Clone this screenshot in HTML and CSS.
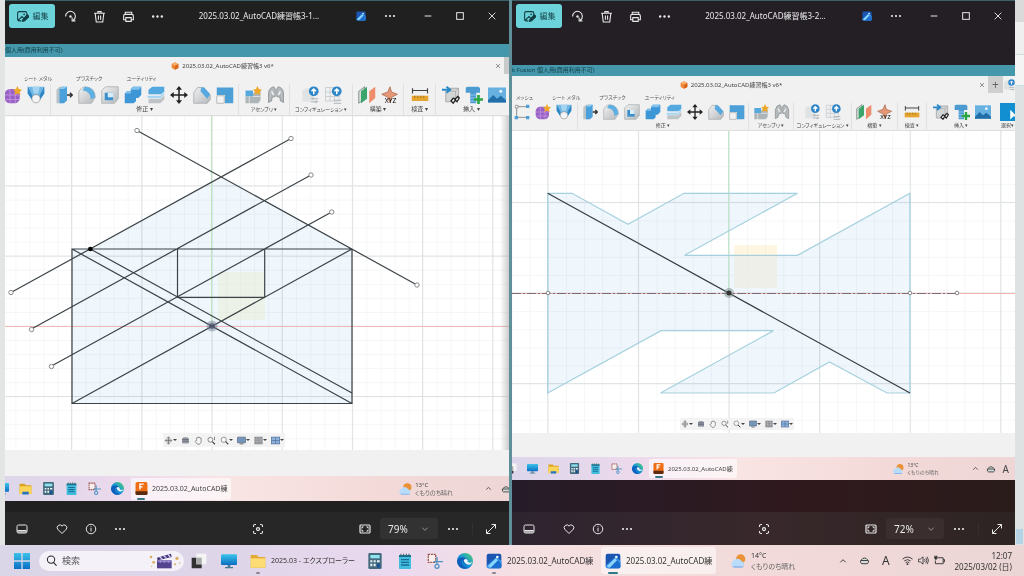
FILE: index.html
```html
<!DOCTYPE html>
<html lang="ja">
<head>
<meta charset="utf-8">
<title>フォト - AutoCAD練習帳</title>
<link rel="stylesheet" href="styles.css">
</head>
<body>
<svg class="sprite" aria-hidden="true">
<defs>
<linearGradient id="gBlue" x1="0" y1="0" x2="0" y2="1"><stop offset="0" stop-color="#3cc3ea"/><stop offset="1" stop-color="#0a6fc4"/></linearGradient>
<linearGradient id="gEdge" x1="0" y1="1" x2="1" y2="0"><stop offset="0" stop-color="#0b55b8"/><stop offset=".5" stop-color="#1797d8"/><stop offset="1" stop-color="#5ad36a"/></linearGradient>
<linearGradient id="gGrey" x1="0" y1="0" x2="1" y2="1"><stop offset="0" stop-color="#f1f1f1"/><stop offset="1" stop-color="#b4b8bb"/></linearGradient>
<pattern id="minorA" x="212" y="326" width="14.04" height="14.04" patternUnits="userSpaceOnUse"><path d="M0 0H14.04M0 0V14.04" stroke="#e6e8e9" fill="none"/></pattern>
<pattern id="majorA" x="211.5" y="325.8" width="70.2" height="70.2" patternUnits="userSpaceOnUse"><path d="M0 .5H71M.5 0V71" stroke="#d3d6d7" fill="none"/></pattern>
<pattern id="minorB" x="729" y="293" width="18.12" height="18.12" patternUnits="userSpaceOnUse"><path d="M0 0H18.12M0 0V18.12" stroke="#e6e8e9" fill="none"/></pattern>
<pattern id="majorB" x="728.5" y="292.5" width="90.6" height="90.6" patternUnits="userSpaceOnUse"><path d="M0 .5H91M.5 0V91" stroke="#d3d8d8" fill="none"/></pattern>

<symbol id="edit" viewBox="0 0 24 24"><g fill="none" stroke="#123d42" stroke-width="2"><path d="M20 11V6a3 3 0 0 0-3-3H6a3 3 0 0 0-3 3v11a3 3 0 0 0 3 3h4M4 19l7-7 3 3"/><path d="M12 21l1-4 8-8 3 3-8 8z" fill="#123d42"/></g><circle cx="15" cy="8" r="1.6" fill="#123d42"/></symbol>
<symbol id="rotate" viewBox="0 0 24 24"><g fill="none" stroke="currentColor" stroke-width="2"><path d="M3 12a9 9 0 1 1 14 7M15 14v6h6"/></g><circle cx="12" cy="12" r="2.2" fill="currentColor"/></symbol>
<symbol id="trash" viewBox="0 0 24 24"><g fill="none" stroke="currentColor" stroke-width="2"><path d="M2 6h20M9 6V3h6v3M4 6l2 16h12l2-16M10 10v8M14 10v8"/></g></symbol>
<symbol id="print" viewBox="0 0 24 24"><g fill="none" stroke="currentColor" stroke-width="2"><path d="M6 8V4h12v4M6 18H3v-7a3 3 0 0 1 3-3h12a3 3 0 0 1 3 3v7h-3M7 14h10v7H7z"/></g></symbol>
<symbol id="dots" viewBox="0 0 24 24"><g fill="currentColor"><circle cx="4" cy="12" r="2.2"/><circle cx="12" cy="12" r="2.2"/><circle cx="20" cy="12" r="2.2"/></g></symbol>
<symbol id="photo" viewBox="0 0 24 24"><rect x="1" y="1" width="22" height="22" rx="3" fill="#1b56b3"/><path d="M1 19L16 6l7 6v9a2 2 0 0 1-2 2H4a3 3 0 0 1-3-3z" fill="#3c9bea"/><path d="M6 23L17 9l6 7v5a2 2 0 0 1-2 2z" fill="#1c6fd0"/><path d="M3 20L15 8l3 3L7 22z" fill="#8fd6fb"/><circle cx="17" cy="6" r="2" fill="#e9f7ff"/></symbol>
<symbol id="min" viewBox="0 0 24 24"><path d="M4 12h16" stroke="currentColor" stroke-width="2.4"/></symbol>
<symbol id="max" viewBox="0 0 24 24"><rect x="4" y="4" width="16" height="16" fill="none" stroke="currentColor" stroke-width="2.4"/></symbol>
<symbol id="close" viewBox="0 0 24 24"><path d="M4 4l16 16M20 4L4 20" stroke="currentColor" stroke-width="2.2"/></symbol>
<symbol id="film" viewBox="0 0 24 24"><rect x="2" y="4" width="20" height="16" rx="3" fill="none" stroke="currentColor" stroke-width="2"/><path d="M3 14h18v5H3z" fill="currentColor"/><path d="M6 16v2M10 16v2M14 16v2M18 16v2" stroke="#333" stroke-width="1.5"/></symbol>
<symbol id="heart" viewBox="0 0 24 24"><path d="M12 21L3.500 12.500a5.200 5.200 0 0 1 8.500-6.500 5.200 5.200 0 0 1 8.500 6.500z" fill="none" stroke="currentColor" stroke-width="2"/></symbol>
<symbol id="info" viewBox="0 0 24 24"><circle cx="12" cy="12" r="9.500" fill="none" stroke="currentColor" stroke-width="2"/><path d="M12 10v7M12 6.500v2" stroke="currentColor" stroke-width="2"/></symbol>
<symbol id="focus" viewBox="0 0 24 24"><path d="M3 8V6a3 3 0 0 1 3-3h2M16 3h2a3 3 0 0 1 3 3v2M21 16v2a3 3 0 0 1-3 3h-2M8 21H6a3 3 0 0 1-3-3v-2" fill="none" stroke="currentColor" stroke-width="2.200"/><circle cx="12" cy="12" r="3" fill="none" stroke="currentColor" stroke-width="2.500"/></symbol>
<symbol id="fit" viewBox="0 0 24 24"><rect x="2" y="4" width="20" height="16" rx="2" fill="none" stroke="currentColor" stroke-width="2.400"/><path d="M5 7h5L5 12zM19 7h-5l5 5zM5 17h5l-5-5zM19 17h-5l5-5z" fill="currentColor"/></symbol>
<symbol id="expand" viewBox="0 0 24 24"><path d="M13 3h8v8M21 3L3 21M3 13v8h8" fill="none" stroke="currentColor" stroke-width="2"/></symbol>
<symbol id="down" viewBox="0 0 24 24"><path d="M4 8l8 8 8-8" fill="none" stroke="currentColor" stroke-width="2.500"/></symbol>
<symbol id="up" viewBox="0 0 24 24"><path d="M4 16l8-8 8 8" fill="none" stroke="currentColor" stroke-width="2.800"/></symbol>

<symbol id="cube" viewBox="0 0 24 24"><path d="M12 1l10 5v12l-10 5-10-5V6z" fill="#ef8634"/><path d="M12 1l10 5-10 5L2 6z" fill="#f8b26f"/><path d="M12 11l10-5v12l-10 5z" fill="#d9641c"/></symbol>
<symbol id="sketch" viewBox="0 0 24 24"><path d="M4 4h16M4 4v16h16" fill="none" stroke="#777" stroke-width="1.200"/><g fill="#4e9fd6"><path d="M18 1h5v5h-5zM1 18h5v5H1zM18 18h5v5h-5z"/></g><path d="M2 2h4v4H2z" fill="#fff" stroke="#777"/></symbol>
<symbol id="form" viewBox="0 0 24 24"><rect x="1" y="4" width="20" height="19" rx="7" fill="#9a62c7"/><path d="M1 12h20M2 18h18M8 4v19M15 4v19" stroke="#c79be4" stroke-width="1"/><path d="M18 0l2 4 4 1-3 3 1 4-4-2-4 2 1-4-3-3 4-1z" fill="#eea82b"/></symbol>
<symbol id="sheet" viewBox="0 0 24 24"><path d="M1 1h22v9l-6 9H7L1 10z" fill="#73b8e4"/><path d="M1 1l6 11v7L1 10zM23 1l-6 11v7l6-9z" fill="#2f88c6"/><path d="M7 1h10l-2 9H9z" fill="#a4d4f2"/><circle cx="12" cy="17" r="5.500" fill="#f5f5f5" stroke="#999"/></symbol>
<symbol id="press" viewBox="0 0 24 24"><path d="M2 5l4-4h6v19l-3 3H2z" fill="#b8c2c7"/><path d="M6 4l4-3h6v18l-4 4H6z" fill="#4aa0da"/><path d="M6 4l4-3h6l-4 3z" fill="#91cbef"/><path d="M16 12h6M20 9l3 3-3 3" fill="none" stroke="#333" stroke-width="2"/></symbol>
<symbol id="fillet" viewBox="0 0 24 24"><path d="M1 8Q4 1 11 1q12 2 12 14l-5 8H1z" fill="url(#gGrey)" stroke="#a7abad"/><path d="M9 1q13 0 14 14l-6 3Q17 7 6 6z" fill="#5fb0e2"/></symbol>
<symbol id="shell" viewBox="0 0 24 24"><path d="M1 6l5-5h17v16l-5 6H1z" fill="url(#gGrey)" stroke="#a5abae"/><path d="M5 9h11v10H5z" fill="#3b8fce"/><path d="M9 9h7v6H9z" fill="#d8edfa"/></symbol>
<symbol id="combine" viewBox="0 0 24 24"><path d="M1 10l3-3h5V4l3-3h11v11l-4 4h-3v4l-3 3H1z" fill="#3d96d5"/><path d="M9 4l3-3h11l-3 4H9zM1 10l3-3h5v3z" fill="#80c2ed"/></symbol>
<symbol id="split" viewBox="0 0 24 24"><path d="M2 5l5-4h16v6l-4 4H2z" fill="#52a8df"/><path d="M1 13h17l5-5v3l-5 5H1z" fill="#a5d5f2"/><path d="M2 17h16l5-5v6l-5 5H2z" fill="#bfc4c7"/></symbol>
<symbol id="move" viewBox="0 0 24 24"><path d="M12 3v18M3 12h18" stroke="#222" stroke-width="2"/><path d="M12 0l4 5H8zM12 24l4-5H8zM0 12l5-4v8zM24 12l-5-4v8z" fill="#222"/></symbol>
<symbol id="chamfer" viewBox="0 0 24 24"><path d="M1 9l5-7h8l9 10v6l-4 5H1z" fill="url(#gGrey)" stroke="#a1a5a7"/><path d="M11 2h4l8 9-4 6-9-10z" fill="#58a9df"/></symbol>
<symbol id="scale" viewBox="0 0 24 24"><path d="M1 2h22v21H12V12H1z" fill="#4ca0d7"/><path d="M1 13h10v10H1z" fill="#f3f3f3" stroke="#a8a8a8"/></symbol>
<symbol id="comp" viewBox="0 0 24 24"><path d="M2 6h10v8H2z" fill="#57a8dc"/><path d="M2 14h10v9H2zM12 10l3-3h7v12l-3 4h-7z" fill="#aeb5b9"/><path d="M12 14h9M7 14v9" stroke="#eee"/><path d="M18 0l2 4 4 1-3 3 1 4-4-2-4 2 1-4-3-3 4-1z" fill="#eea82b"/></symbol>
<symbol id="joint" viewBox="0 0 24 24"><path d="M2 22V9q1-7 7-8l2 3v10l-4 1-1 5zM22 22V9q-1-7-7-8l-2 3v10l4 1 1 5z" fill="#b4b9bb" stroke="#858b8e"/><path d="M6 7l3 5M18 7l-3 5" stroke="#eee" stroke-width="2"/></symbol>
<symbol id="conf1" viewBox="0 0 24 24"><path d="M2 6l5-3h9v14l-4 4H2z" fill="#e0e3e4"/><path d="M13 17h10M13 21h10M16 15v4M20 19v4" stroke="#b0b5b8" stroke-width="1.500"/><circle cx="17" cy="7" r="6.500" fill="#2e86c8"/><path d="M17 11V5M14 7l3-3 3 3" stroke="#fff" stroke-width="2" fill="none"/></symbol>
<symbol id="conf2" viewBox="0 0 24 24"><path d="M2 2h18v18H2zM2 8h18M2 14h18M8 2v18M14 2v18" stroke="#c3c8ca" fill="#eff0f1"/><path d="M13 19h10M13 23h10" stroke="#b0b5b8" stroke-width="1.500"/><circle cx="17" cy="7" r="6.500" fill="#2e86c8"/><path d="M17 11V5M14 7l3-3 3 3" stroke="#fff" stroke-width="2" fill="none"/></symbol>
<symbol id="plane" viewBox="0 0 24 24"><path d="M1 7l8-6v16l-8 6z" fill="#d9dddc" stroke="#67796f"/><path d="M4 7l8-6v16l-8 6z" fill="#3ca56c"/><path d="M15 7l8-6v15l-8 7z" fill="#ee8d6b"/></symbol>
<symbol id="axis" viewBox="0 0 24 24"><path d="M12 1l2 7 8 3-8 4-2 7-3-7-8-4 8-3z" fill="#e59775" stroke="#a7674c"/><text x="5" y="23" class="xyz">XYZ</text></symbol>
<symbol id="measure" viewBox="0 0 24 24"><path d="M2 3v7M22 3v7M2 6h20" stroke="#444" stroke-width="1.500"/><path d="M1 13h22v7H1z" fill="#e5a52f"/><path d="M5 13v3M9 13v3M13 13v3M17 13v3" stroke="#956817"/></symbol>
<symbol id="derive" viewBox="0 0 24 24"><path d="M5 7l4-4h13v12l-4 6H5z" fill="#d3d6d7" stroke="#999"/><path d="M5 7h13l4-4M18 7v14" fill="none" stroke="#aaa"/><path d="M0 5h9M6 1l5 4-5 4" fill="none" stroke="#2989ca" stroke-width="2.500"/><path d="M12 20l3-4 3 2-3 5zM17 18l4-4 2 2-3 5z" fill="#eee" stroke="#222" stroke-width="1.700"/></symbol>
<symbol id="bolt" viewBox="0 0 24 24"><path d="M1 2l3-1h14l2 2v6H1zM7 9h8v14H7z" fill="#4b9bd2"/><path d="M7 12h8M7 16h8M7 20h8" stroke="#a9d5ef"/><path d="M18 12v12M12 18h12" stroke="#2ba543" stroke-width="3.500"/></symbol>
<symbol id="image" viewBox="0 0 24 24"><rect y="2" width="24" height="20" fill="#66b1e0"/><circle cx="17" cy="7" r="2" fill="#eef8ff"/><path d="M0 19l7-7 5 5 5-4 7 6v3H0z" fill="#216ea9"/></symbol>
<symbol id="cursor" viewBox="0 0 24 24"><rect width="24" height="24" fill="#118fd0"/><path d="M15 9v13l4-4h5z" fill="#fff"/></symbol>

<symbol id="orbit" viewBox="0 0 24 24"><path d="M12 3v18M3 12h18M8 6l4-4 4 4M8 18l4 4 4-4" fill="none" stroke="#666" stroke-width="2"/><ellipse cx="12" cy="12" rx="9" ry="4" fill="none" stroke="#777" stroke-width="1.500"/></symbol>
<symbol id="look" viewBox="0 0 24 24"><path d="M3 7l4-4h10l4 4v13H3z" fill="#999ca5"/><path d="M3 9h18M3 14h18" stroke="#555c6c" stroke-width="2"/></symbol>
<symbol id="hand" viewBox="0 0 24 24"><path d="M7 12V5h3V3h3v1h3v2h3v10l-4 6H9l-6-8 2-2z" fill="#f7f7f7" stroke="#666" stroke-width="1.800"/></symbol>
<symbol id="zoom" viewBox="0 0 24 24"><circle cx="9" cy="10" r="6.500" fill="#f7f7f7" stroke="#666" stroke-width="2"/><path d="M14 15l7 7" stroke="#444" stroke-width="3"/><path d="M20 2v9" stroke="#666" stroke-width="2"/></symbol>
<symbol id="zoomw" viewBox="0 0 24 24"><circle cx="10" cy="10" r="7" fill="#f7f7f7" stroke="#777" stroke-width="2"/><path d="M15 15l7 7" stroke="#444" stroke-width="3"/></symbol>
<symbol id="view" viewBox="0 0 24 24"><rect x="1" y="3" width="22" height="15" rx="1" fill="#7696b9" stroke="#5a6e88" stroke-width="2"/><path d="M7 21h10" stroke="#777" stroke-width="3"/></symbol>
<symbol id="grid" viewBox="0 0 24 24"><rect x="1" y="2" width="22" height="20" fill="#8e9195"/><path d="M1 8h22M1 14h22M8 2v20M16 2v20" stroke="#c7cacd"/></symbol>
<symbol id="panes" viewBox="0 0 24 24"><rect x="1" y="3" width="22" height="18" fill="#8db1dc" stroke="#54759f" stroke-width="2"/><path d="M12 3v18M1 12h22" stroke="#54759f" stroke-width="2"/></symbol>

<symbol id="start" viewBox="0 0 24 24"><path d="M0 0h11v11H0zM13 0h11v11H13zM0 13h11v11H0zM13 13h11v11H13z" fill="url(#gBlue)"/></symbol>
<symbol id="search" viewBox="0 0 24 24"><circle cx="11" cy="10" r="8" fill="none" stroke="#222" stroke-width="2.200"/><path d="M16 16l7 7" stroke="#222" stroke-width="2.500"/></symbol>
<symbol id="clap" viewBox="0 0 48 24"><path d="M12 11h22v12H12z" fill="#54448d"/><path d="M12 7l21-6 1 5-21 5z" fill="#413476"/><path d="M16 6l4 3M22 4l4 3M28 2l4 4" stroke="#d8cffa" stroke-width="2"/><path d="M13 13h21M17 11v4M23 11v4M29 11v4" stroke="#9f8fdb" stroke-width="1.500"/><g fill="#d9ad5a"><circle cx="3" cy="6" r="2"/><circle cx="7" cy="14" r="2"/><circle cx="4" cy="20" r="1"/><circle cx="42" cy="8" r="2.500"/><circle cx="39" cy="17" r="1.500"/><circle cx="46" cy="15" r="1"/></g></symbol>
<symbol id="desk" viewBox="0 0 24 24"><path d="M8 1h15v16H8z" fill="#f4f4f4"/><path d="M1 7h7v10h8v6H1z" fill="#303030"/><path d="M8 7h8v10H8z" fill="#aaa"/></symbol>
<symbol id="monitor" viewBox="0 0 24 24"><rect y="2" width="24" height="16" rx="1.500" fill="url(#gBlue)"/><path d="M10 18h4v3h4v2H6v-2h4z" fill="#4a7992"/></symbol>
<symbol id="folder" viewBox="0 0 24 24"><path d="M1 3h9l3 3h10v16H1z" fill="#dca323"/><path d="M1 8h22v14H1z" fill="#fbd559"/><path d="M6 18h12v5H6z" fill="#2774bf"/></symbol>
<symbol id="folder2" viewBox="0 0 24 24"><path d="M1 3h9l3 3h10v16H1z" fill="#e3aa33"/><path d="M1 8h22v14H1z" fill="#fcdc74"/></symbol>
<symbol id="calc" viewBox="0 0 24 24"><rect x="2" width="20" height="24" rx="2" fill="#436a7d"/><path d="M5 3h14v5H5z" fill="#8ee3ed"/><path d="M5 11h3v3H5zM10 11h3v3h-3zM5 16h3v4H5zM10 16h3v4h-3zM15 11h4v3h-4z" fill="#ecf5f7"/><path d="M15 16h4v6h-4z" fill="#164f9a"/></symbol>
<symbol id="note" viewBox="0 0 24 24"><rect x="3" y="3" width="18" height="21" rx="1" fill="#42bddd"/><path d="M3 3h18v3H3z" fill="#16718e"/><path d="M6 1v4M10 1v4M14 1v4M18 1v4" stroke="#3b6270" stroke-width="1.500"/><path d="M6 10h12M6 14h12M6 18h12" stroke="#176d96" stroke-width="2"/></symbol>
<symbol id="snip" viewBox="0 0 24 24"><path d="M2 2h11v12H2z" fill="#f9eeee" stroke="#9e5c55" stroke-width="2" stroke-dasharray="3 1"/><path d="M10 13h14M15 6v11" stroke="#4e94c4" stroke-width="2"/><circle cx="15" cy="20" r="3" fill="none" stroke="#4e94c4" stroke-width="2"/></symbol>
<symbol id="edge" viewBox="0 0 24 24"><circle cx="12" cy="12" r="12" fill="url(#gEdge)"/><path d="M8 10c-3 6 1 12 8 12-8 4-15-2-16-10 2-7 14-8 16 0 1 3-3 3-1 5-5-1-6-3-7-7z" fill="#0f60bd"/><path d="M10 11q3-4 6 0-1 5 7 3-3 5-8 3-4-1-5-6z" fill="#eaf6fb"/></symbol>
<symbol id="fusion" viewBox="0 0 24 24"><rect x="1" width="22" height="24" rx="3" fill="#ef6d13"/><path d="M1 17h22v4a3 3 0 0 1-3 3H4a3 3 0 0 1-3-3z" fill="#5d2b12"/><path d="M9 14V4h7M9 9h5" stroke="#fff" stroke-width="2.500" fill="none"/></symbol>
<symbol id="weather" viewBox="0 0 24 24"><circle cx="16" cy="9" r="7" fill="#eb9237"/><path d="M5 21a5 5 0 0 1 0-9 7 7 0 0 1 12 0 5 5 0 0 1 2 9z" fill="#b9dcfa"/><path d="M3 20h18q-1 2-4 2H6z" fill="#8eb4ee"/></symbol>
<symbol id="cloud" viewBox="0 0 24 24"><path d="M6 19a5 5 0 0 1 0-9 7 7 0 0 1 12 0 5 5 0 0 1 0 9z" fill="#d4dbd8" stroke="#333" stroke-width="2"/><path d="M4 12h16" stroke="#333" stroke-width="2"/></symbol>
<symbol id="wifi" viewBox="0 0 24 24"><path d="M1 9q11-9 22 0M5 13q7-6 14 0M8 17q4-4 8 0" fill="none" stroke="#333" stroke-width="2"/><circle cx="12" cy="20" r="2" fill="#333"/></symbol>
<symbol id="vol" viewBox="0 0 24 24"><path d="M1 9h4l6-5v16l-6-5H1zM14 9q3 3 0 6M17 6q5 6 0 12M20 4q6 8 0 16" fill="none" stroke="#333" stroke-width="1.800"/></symbol>
<symbol id="batt" viewBox="0 0 24 24"><path d="M8 6h12v13H3v-7M20 10h3v5h-3" fill="none" stroke="#333" stroke-width="2"/><path d="M1 3h6v4l-2 3H3L1 7zM2 1v3M6 1v3" fill="#333" stroke="#333"/></symbol>
</defs>
</svg>

<main class="desktop">
  <section class="window win-a">
    <header class="titlebar">
      <div class="tools">
        <button class="edit"><svg><use href="#edit"/></svg>編集</button>
        <button aria-label="回転"><svg><use href="#rotate"/></svg></button>
        <button aria-label="削除"><svg><use href="#trash"/></svg></button>
        <button aria-label="印刷"><svg><use href="#print"/></svg></button>
        <button aria-label="その他"><svg><use href="#dots"/></svg></button>
      </div>
      <h1>2025.03.02_AutoCAD練習帳3-1...</h1>
      <div class="controls">
        <button class="app" aria-label="フォト"><svg><use href="#photo"/></svg></button>
        <button class="more" aria-label="メニュー"><svg><use href="#dots"/></svg></button>
        <button aria-label="最小化"><svg><use href="#min"/></svg></button>
        <button aria-label="最大化"><svg><use href="#max"/></svg></button>
        <button aria-label="閉じる"><svg><use href="#close"/></svg></button>
      </div>
    </header>
    <div class="photo">
      <div class="caption">個人用(商用利用不可)</div>
      <div class="doc-tab"><span class="doc-name"><svg><use href="#cube"/></svg>2025.03.02_AutoCAD練習帳3 v6*</span><button class="tab-close" aria-label="タブを閉じる"><svg><use href="#close"/></svg></button><span class="tab-end"></span></div>
      <nav class="ribbon-tabs"><a href="#">シート メタル</a><a href="#">プラスチック</a><a href="#">ユーティリティ</a></nav>
      <div class="ribbon">
        <div class="group first"><div class="icons"><button aria-label="フォーム"><svg><use href="#form"/></svg></button><button aria-label="フランジ"><svg><use href="#sheet"/></svg></button></div></div>
        <div class="group"><div class="icons"><button aria-label="プレス"><svg><use href="#press"/></svg></button><button aria-label="フィレット"><svg><use href="#fillet"/></svg></button><button aria-label="シェル"><svg><use href="#shell"/></svg></button><button aria-label="結合"><svg><use href="#combine"/></svg></button><button aria-label="分割"><svg><use href="#split"/></svg></button><button aria-label="移動"><svg><use href="#move"/></svg></button><button aria-label="面取り"><svg><use href="#chamfer"/></svg></button><button aria-label="尺度"><svg><use href="#scale"/></svg></button></div><span class="label">修正 ▾</span></div>
        <div class="group"><div class="icons"><button aria-label="コンポーネント"><svg><use href="#comp"/></svg></button><button aria-label="ジョイント"><svg><use href="#joint"/></svg></button></div><span class="label kana">アセンブリ ▾</span></div>
        <div class="group"><div class="icons"><button aria-label="構成"><svg><use href="#conf1"/></svg></button><button aria-label="構成表"><svg><use href="#conf2"/></svg></button></div><span class="label kana">コンフィギュレーション ▾</span></div>
        <div class="group"><div class="icons"><button aria-label="平面"><svg><use href="#plane"/></svg></button><button aria-label="軸"><svg><use href="#axis"/></svg></button></div><span class="label">構築 ▾</span></div>
        <div class="group"><div class="icons"><button aria-label="計測"><svg><use href="#measure"/></svg></button></div><span class="label">検査 ▾</span></div>
        <div class="group insert"><div class="icons"><button aria-label="派生"><svg><use href="#derive"/></svg></button><button aria-label="締結"><svg><use href="#bolt"/></svg></button><button aria-label="画像"><svg><use href="#image"/></svg></button></div><span class="label">挿入 ▾</span></div>
      </div>
      <div class="canvas">
        <svg class="drawing" viewBox="5 116 504 334" preserveAspectRatio="xMidYMid slice">
          <rect x="5" y="116" width="504" height="334" fill="#fff"/>
          <path d="M72 249h18l131-72 131 72v154.500H72z" fill="#eff7fd"/>
          <g class="blend"><rect x="5" y="116" width="504" height="334" fill="url(#minorA)"/><rect x="5" y="116" width="504" height="334" fill="url(#majorA)"/></g>
          <rect x="218" y="272" width="47" height="48" fill="#ecebc8" opacity=".4"/>
          <path d="M5 326.500h504" stroke="#f0b9b5"/><path d="M211.500 116v211" stroke="#bde8bd"/>
          <g class="ink"><path d="M72 249h280v154.500H72zM177.500 249v48.300h87.200V249M137 130.500L417 285M291 138.500L11 292.500M311 175L31.500 329M331.700 212L51.500 366M72 403.500L352 249M72 249l280 154.500M90.300 249L352 393"/></g>
          <g class="ends"><circle cx="137" cy="130.500" r="2.200"/><circle cx="417" cy="285" r="2.200"/><circle cx="291" cy="138.500" r="2.200"/><circle cx="11" cy="292.500" r="2.200"/><circle cx="311" cy="175" r="2.200"/><circle cx="31.500" cy="329.500" r="2.200"/><circle cx="331.700" cy="212" r="2.200"/><circle cx="51.500" cy="366.500" r="2.200"/></g>
          <circle cx="90.300" cy="249" r="2.300"/>
          <circle cx="212" cy="326" r="5.500" fill="#6c7a8d" opacity=".45"/><circle cx="212" cy="326" r="3" fill="#3d4460" opacity=".6"/>
        </svg>
        <div class="navbar">
          <button class="drop" aria-label="オービット"><svg><use href="#orbit"/></svg></button><button aria-label="ビュー正面"><svg><use href="#look"/></svg></button><button aria-label="画面移動"><svg><use href="#hand"/></svg></button><button aria-label="ズーム"><svg><use href="#zoom"/></svg></button><button class="drop" aria-label="フィット"><svg><use href="#zoomw"/></svg></button><button class="drop" aria-label="表示設定"><svg><use href="#view"/></svg></button><button class="drop" aria-label="グリッド"><svg><use href="#grid"/></svg></button><button class="drop" aria-label="ビューポート"><svg><use href="#panes"/></svg></button>
        </div>
      </div>
      <div class="status"></div>
      <div class="inner-task">
        <div class="pins"><svg><use href="#monitor"/></svg><svg><use href="#folder"/></svg><svg><use href="#calc"/></svg><svg><use href="#note"/></svg><svg><use href="#snip"/></svg><svg><use href="#edge"/></svg></div>
        <div class="running"><svg><use href="#fusion"/></svg><span>2025.03.02_AutoCAD練</span></div>
        <div class="forecast"><svg><use href="#weather"/></svg><p>13°C<br><small>くもりのち晴れ</small></p></div>
        <div class="tray"><svg><use href="#up"/></svg><svg><use href="#cloud"/></svg></div>
      </div>
    </div>
    <footer class="bottombar">
      <div class="tools"><button class="film" aria-label="フィルムストリップ"><svg><use href="#film"/></svg></button><button aria-label="お気に入り"><svg><use href="#heart"/></svg></button><button aria-label="情報"><svg><use href="#info"/></svg></button><button aria-label="その他"><svg><use href="#dots"/></svg></button></div>
      <button aria-label="スキャン"><svg><use href="#focus"/></svg></button>
      <div class="zoomtools"><button aria-label="ウィンドウに合わせる"><svg><use href="#fit"/></svg></button><label class="zoom"><select aria-label="拡大率"><option>79%</option></select><svg><use href="#down"/></svg></label><button class="more" aria-label="その他"><svg><use href="#dots"/></svg></button><button class="full" aria-label="全画面"><svg><use href="#expand"/></svg></button></div>
    </footer>
  </section>

  <section class="window win-b">
    <header class="titlebar">
      <div class="tools">
        <button class="edit"><svg><use href="#edit"/></svg>編集</button>
        <button aria-label="回転"><svg><use href="#rotate"/></svg></button>
        <button aria-label="削除"><svg><use href="#trash"/></svg></button>
        <button aria-label="印刷"><svg><use href="#print"/></svg></button>
        <button aria-label="その他"><svg><use href="#dots"/></svg></button>
      </div>
      <h1>2025.03.02_AutoCAD練習帳3-2...</h1>
      <div class="controls">
        <button class="app" aria-label="フォト"><svg><use href="#photo"/></svg></button>
        <button class="more" aria-label="メニュー"><svg><use href="#dots"/></svg></button>
        <button aria-label="最小化"><svg><use href="#min"/></svg></button>
        <button aria-label="最大化"><svg><use href="#max"/></svg></button>
        <button aria-label="閉じる"><svg><use href="#close"/></svg></button>
      </div>
    </header>
    <div class="photo">
      <div class="caption">k Fusion 個人用(商用利用不可)</div>
      <div class="doc-tab"><span class="doc-name"><svg><use href="#cube"/></svg>2025.03.02_AutoCAD練習帳3 v6*</span><button class="tab-close" aria-label="タブを閉じる"><svg><use href="#close"/></svg></button><button class="tab-add" aria-label="新しいタブ">+</button><svg class="ext"><use href="#conf1"/></svg></div>
      <nav class="ribbon-tabs"><a href="#">メッシュ</a><a href="#">シート メタル</a><a href="#">プラスチック</a><a href="#">ユーティリティ</a></nav>
      <div class="ribbon">
        <div class="group first"><div class="icons"><button aria-label="スケッチ"><svg><use href="#sketch"/></svg></button><button aria-label="フォーム"><svg><use href="#form"/></svg></button><button aria-label="フランジ"><svg><use href="#sheet"/></svg></button></div></div>
        <div class="group"><div class="icons"><button aria-label="プレス"><svg><use href="#press"/></svg></button><button aria-label="フィレット"><svg><use href="#fillet"/></svg></button><button aria-label="シェル"><svg><use href="#shell"/></svg></button><button aria-label="結合"><svg><use href="#combine"/></svg></button><button aria-label="分割"><svg><use href="#split"/></svg></button><button aria-label="移動"><svg><use href="#move"/></svg></button><button aria-label="面取り"><svg><use href="#chamfer"/></svg></button><button aria-label="尺度"><svg><use href="#scale"/></svg></button></div><span class="label">修正 ▾</span></div>
        <div class="group"><div class="icons"><button aria-label="コンポーネント"><svg><use href="#comp"/></svg></button><button aria-label="ジョイント"><svg><use href="#joint"/></svg></button></div><span class="label kana">アセンブリ ▾</span></div>
        <div class="group"><div class="icons"><button aria-label="構成"><svg><use href="#conf1"/></svg></button><button aria-label="構成表"><svg><use href="#conf2"/></svg></button></div><span class="label kana">コンフィギュレーション ▾</span></div>
        <div class="group"><div class="icons"><button aria-label="平面"><svg><use href="#plane"/></svg></button><button aria-label="軸"><svg><use href="#axis"/></svg></button></div><span class="label">構築 ▾</span></div>
        <div class="group"><div class="icons"><button aria-label="計測"><svg><use href="#measure"/></svg></button></div><span class="label">検査 ▾</span></div>
        <div class="group insert"><div class="icons"><button aria-label="派生"><svg><use href="#derive"/></svg></button><button aria-label="締結"><svg><use href="#bolt"/></svg></button><button aria-label="画像"><svg><use href="#image"/></svg></button></div><span class="label">挿入 ▾</span></div>
        <div class="group select"><div class="icons"><button aria-label="選択ツール"><svg><use href="#cursor"/></svg></button></div><span class="label">選択▾</span></div>
      </div>
      <div class="canvas">
        <svg class="drawing" viewBox="512 131 503 302" preserveAspectRatio="xMidYMid slice">
          <rect x="512" y="131" width="503" height="302" fill="#fff"/>
          <rect x="734" y="245" width="43" height="43" fill="#fff6e2"/>
          <path d="M547.700 193.300H572l56 31 56-31h113.500l-113 62h113l112.500-62V393H887l-57.500-31L774 393H660.500l113-62.300H661L547.700 393z" fill="#eff7fd"/>
          <g class="blend"><rect x="512" y="131" width="503" height="302" fill="url(#minorB)"/><rect x="512" y="131" width="503" height="302" fill="url(#majorB)"/></g>
          <rect x="734" y="255" width="43" height="33" fill="#eeece2" opacity=".75"/>
          <path d="M728.500 131v162" stroke="#bfe8cd"/><path d="M512 293.500h503" stroke="#efb4b1"/>
          <path d="M547.700 193.300H572l56 31 56-31h113.500l-113 62h113l112.500-62V393H887l-57.500-31L774 393H660.500l113-62.300H661L547.700 393z" fill="none" stroke="#a5d0de" stroke-width="1.200"/>
          <path d="M512 293.500h445" stroke="#806b70" stroke-dasharray="9 2 2 2"/>
          <path d="M547.700 193.300L910 393" stroke="#353b3e" stroke-width="1.200"/>
          <g class="ends"><circle cx="548" cy="293" r="1.800"/><circle cx="910" cy="293" r="1.800"/><circle cx="957" cy="293" r="1.800"/></g>
          <circle cx="729" cy="293" r="5" fill="#7c8e8c" opacity=".5"/><circle cx="729" cy="293" r="2.500" fill="#333"/>
        </svg>
        <div class="navbar">
          <button class="drop" aria-label="オービット"><svg><use href="#orbit"/></svg></button><button aria-label="ビュー正面"><svg><use href="#look"/></svg></button><button aria-label="画面移動"><svg><use href="#hand"/></svg></button><button aria-label="ズーム"><svg><use href="#zoom"/></svg></button><button class="drop" aria-label="フィット"><svg><use href="#zoomw"/></svg></button><button class="drop" aria-label="表示設定"><svg><use href="#view"/></svg></button><button class="drop" aria-label="グリッド"><svg><use href="#grid"/></svg></button><button class="drop" aria-label="ビューポート"><svg><use href="#panes"/></svg></button>
        </div>
      </div>
      <div class="status"></div>
      <div class="inner-task">
        <div class="pins"><svg><use href="#desk"/></svg><svg><use href="#monitor"/></svg><svg><use href="#folder"/></svg><svg><use href="#calc"/></svg><svg><use href="#note"/></svg><svg><use href="#snip"/></svg><svg><use href="#edge"/></svg></div>
        <div class="running"><svg><use href="#fusion"/></svg><span>2025.03.02_AutoCAD練</span></div>
        <div class="forecast"><svg><use href="#weather"/></svg><p>13°C<br><small>くもりのち晴れ</small></p></div>
        <div class="tray"><svg><use href="#up"/></svg><svg><use href="#cloud"/></svg><span>A</span></div>
      </div>
    </div>
    <footer class="bottombar">
      <div class="tools"><button class="film" aria-label="フィルムストリップ"><svg><use href="#film"/></svg></button><button aria-label="お気に入り"><svg><use href="#heart"/></svg></button><button aria-label="情報"><svg><use href="#info"/></svg></button><button aria-label="その他"><svg><use href="#dots"/></svg></button></div>
      <button aria-label="スキャン"><svg><use href="#focus"/></svg></button>
      <div class="zoomtools"><button aria-label="ウィンドウに合わせる"><svg><use href="#fit"/></svg></button><label class="zoom"><select aria-label="拡大率"><option>72%</option></select><svg><use href="#down"/></svg></label><button class="more" aria-label="その他"><svg><use href="#dots"/></svg></button><button class="full" aria-label="全画面"><svg><use href="#expand"/></svg></button></div>
    </footer>
  </section>
</main>

<footer class="taskbar">
  <button class="start" aria-label="スタート"><svg><use href="#start"/></svg></button>
  <label class="search"><svg class="glass"><use href="#search"/></svg><input type="text" placeholder="検索" aria-label="検索"><svg class="clap"><use href="#clap"/></svg></label>
  <button class="pin" aria-label="タスク ビュー"><svg><use href="#desk"/></svg></button>
  <button class="pin" aria-label="デスクトップ"><svg><use href="#monitor"/></svg></button>
  <button class="task explorer open"><svg><use href="#folder2"/></svg><span>2025.03 - エクスプローラー</span></button>
  <button class="pin" aria-label="電卓"><svg><use href="#calc"/></svg></button>
  <button class="pin" aria-label="メモ帳"><svg><use href="#note"/></svg></button>
  <button class="pin" aria-label="切り取り"><svg><use href="#snip"/></svg></button>
  <button class="pin" aria-label="Edge"><svg><use href="#edge"/></svg></button>
  <button class="task open"><svg><use href="#photo"/></svg><span>2025.03.02_AutoCAD練</span></button>
  <button class="task open current"><svg><use href="#photo"/></svg><span>2025.03.02_AutoCAD練</span></button>
  <div class="forecast"><svg><use href="#weather"/></svg><p>14°C<br><small>くもりのち晴れ</small></p></div>
  <div class="systray">
    <svg class="tiny"><use href="#up"/></svg><svg><use href="#cloud"/></svg><span class="ime">A</span>
    <div class="status-icons"><svg><use href="#wifi"/></svg><svg><use href="#vol"/></svg><svg><use href="#batt"/></svg></div>
    <p class="clock"><time>12:07</time><br>2025/03/02 (日)</p>
  </div>
</footer>
</body>
</html>
```
FILE: styles.css
```css
* { box-sizing: border-box; }
body {
  margin: 0;
  height: 100vh;
  display: flex;
  flex-direction: column;
  overflow: hidden;
  font: 8px/12px "Noto Sans", "Noto Sans CJK JP", sans-serif;
  font-feature-settings: "palt";
  color: #333;
}
button, select, input { font: inherit; color: inherit; border: 0; background: none; padding: 0; margin: 0; }
button { display: flex; align-items: center; justify-content: center; flex: none; }
svg { display: block; flex: none; }
h1, p { margin: 0; }
.sprite { position: absolute; width: 0; height: 0; }

.desktop {
  flex: 1;
  min-height: 0;
  display: grid;
  grid-template-columns: 504fr 503fr;
  column-gap: 3px;
  padding: 0 9px 0 5px;
  background: linear-gradient(#b5d3e4, #b5d3e4) right 1px bottom 1px / 7px 15px no-repeat,
    linear-gradient(90deg, #e3e5e5 0 5px, #5f8f99 5px calc(100% - 9px), transparent calc(100% - 9px)),
    linear-gradient(#dadada 0 22px, #efefef 22px 54px, #d2dde0 54px 55px, #f4f4f4 55px 85px, #c9dde4 85px 86px, #dfe2e3 86px 100%);
}
.window { min-width: 0; display: flex; flex-direction: column; overflow: hidden; border-top: 1px solid #3c6269; color: #e8e8e8; }
.win-a { --cell: 23px; --ico: 18px; background: #202020; }
.win-b { --cell: 21px; --ico: 16px; background: linear-gradient(#231f24 0 440px, transparent 480px), linear-gradient(90deg, #261c29, #30191d 60%, #2a1c1b); }

.titlebar { flex: none; display: grid; grid-template-columns: 1fr auto 1fr; align-items: start; padding: 0 0 13px 4px; }
.win-b .titlebar { padding-bottom: 34px; }
.titlebar > * { height: 30px; display: flex; align-items: center; }
.titlebar h1 { font-size: 8px; font-weight: 400; white-space: nowrap; }
.tools button { width: 29px; }
.tools svg { width: 13px; height: 13px; }
.tools .edit { width: 46px; height: 24px; margin-right: 1px; gap: 4px; border-radius: 3px; background: #6dd3db; color: #16484e; font-size: 8px; }
.controls { justify-content: flex-end; padding-right: 1px; }
.controls button { width: 32px; }
.controls svg { width: 10px; height: 10px; }
.controls .app { width: 30px; }
.controls .more { width: 36px; padding-right: 8px; }
.controls .more svg { width: 12px; height: 12px; }

.photo { flex: none; height: 457px; display: flex; flex-direction: column; color: #444; background: #f1f1f1; }
.win-b .photo { height: 415px; }
.caption { height: 13px; background: #4597ab; color: #123f49; font-size: 6px; line-height: 12px; white-space: nowrap; }
.win-b .caption { height: 11px; line-height: 10px; }
.doc-tab { height: 17px; display: flex; align-items: center; justify-content: flex-end; font-size: 6px; background: #f1f1f1; }
.doc-name { flex: 1; display: flex; justify-content: center; align-items: center; gap: 3px; padding-right: 52px; white-space: nowrap; }
.doc-name svg { width: 8px; height: 8px; }
.tab-close { width: 12px; }
.tab-close svg { width: 6px; height: 6px; }
.tab-end { width: 5px; align-self: stretch; background: #c9cbcb; }
.win-b .doc-name { padding-right: 26px; }
.tab-add { width: 15px; align-self: stretch; background: #cfcfcf; font-size: 12px; color: #666; }
.ext { width: 12px; height: 12px; }
.ribbon-tabs { height: 10px; display: flex; gap: 24px; padding-left: 19px; font-size: 5px; line-height: 8px; white-space: nowrap; }
.win-b .ribbon-tabs { gap: 19px; padding-left: 4px; }
.ribbon-tabs a { color: #555; text-decoration: none; }
.ribbon { height: 32px; display: grid; grid-template-columns: 45px 188px 51px 63px 51px 32px 1fr; border-bottom: 1px solid #dedede; }
.win-b .ribbon { height: 28px; grid-template-columns: 65px 171px 45px 58px 46px 29px 74px 1fr; }
.group { min-width: 0; display: flex; flex-direction: column; align-items: center; border-left: 1px solid #e0e0e0; overflow: hidden; }
.group.first { border-left: 0; align-items: flex-start; }
.first .icons { margin-left: -4px; }
.win-b .first .icons { margin-left: -1px; }
.group.insert { align-items: flex-start; }
.insert .icons { padding-left: 3px; }
.insert .label { padding-left: 27px; }
.group.select { border-left: 0; }
.icons { display: flex; }
.icons button { width: var(--cell); height: 21px; }
.win-b .icons button { height: 18px; }
.icons svg { width: var(--ico); height: var(--ico); }
.label { font-size: 6px; line-height: 8px; white-space: nowrap; }
.kana, .win-b .label { font-size: 5px; }
.select .icons svg { width: 18px; height: 18px; }
.xyz { font: 9px "Noto Sans", sans-serif; }

.canvas { flex: 1; min-height: 0; position: relative; overflow: hidden; background: #fff; }
.canvas::after { content: ""; position: absolute; inset: 0 0 0 auto; width: 9px; background: linear-gradient(90deg, transparent, #9997); }
.win-b .canvas::after { display: none; }
.drawing { width: 100%; height: 100%; }
.blend { mix-blend-mode: multiply; opacity: .75; }
.ink { fill: none; stroke: #3c4347; stroke-width: 1.2; }
.ends { fill: #fff; stroke: #888; }
.navbar { position: absolute; left: 158px; bottom: 3px; height: 14px; display: flex; align-items: center; gap: 4px; padding: 0 1px; background: #f3f3f3; }
.navbar svg { width: 9px; height: 9px; }
.navbar .drop::after { content: ""; border: 2px solid transparent; border-top-color: #444; border-bottom: 0; }
.win-b .navbar { left: 168px; height: 12px; }
.win-b .navbar svg { width: 8px; height: 8px; }
.status { height: 26px; background: #f1f1f1; }
.win-b .status { height: 24px; }

.inner-task { height: 25px; display: flex; align-items: center; background: linear-gradient(90deg, #ddd6ea, #ecd9ec 24%, #f9e4e4 45%, #f3dad9 75%, #eed6d6); overflow: hidden; }
.win-b .inner-task { height: 23px; }
.pins { display: flex; gap: 10px; margin-left: -9px; margin-right: 7px; }
.pins svg, .running svg { width: 13px; height: 13px; }
.win-b .pins { margin-left: -6px; margin-right: 6px; }
.win-b .pins svg, .win-b .running svg { width: 11px; height: 11px; }
.running { position: relative; height: 22px; display: flex; align-items: center; gap: 4px; padding: 0 4px; background: #fff9; border-radius: 2px; font-size: 7px; white-space: nowrap; }
.running::after { content: ""; position: absolute; left: 6px; bottom: 0; width: 8px; height: 2px; border-radius: 1px; background: #3b7885; }
.win-b .running { height: 19px; font-size: 6px; }
.forecast { display: flex; align-items: center; gap: 3px; white-space: nowrap; }
.forecast small { font-size: inherit; color: #666; }
.inner-task .forecast { margin-left: auto; font-size: 6px; line-height: 8px; }
.inner-task .forecast svg { width: 14px; height: 14px; }
.win-b .inner-task .forecast { font-size: 5px; line-height: 7px; }
.win-b .inner-task .forecast svg { width: 12px; height: 12px; }
.tray { display: flex; align-items: center; justify-content: flex-end; gap: 9px; width: 58px; margin-right: -2px; }
.tray svg { width: 10px; height: 10px; }
.tray svg:first-child { width: 7px; height: 7px; }
.win-b .tray { width: 70px; gap: 7px; margin-right: 6px; }
.tray span { font-size: 10px; }

.bottombar { flex: none; height: 33px; margin-top: auto; display: grid; grid-template-columns: 1fr auto 1fr; align-items: center; background: #272727; padding: 0 1px 0 2px; }
.win-b .bottombar { background: linear-gradient(90deg, #2e2430, #38282b 50%, #2e2423); }
.bottombar .tools, .zoomtools { display: flex; align-items: center; }
.bottombar .film { margin-right: 11px; }
.bottombar svg { width: 12px; height: 12px; }
.zoomtools { justify-content: flex-end; }
.zoomtools > button { width: 30px; }
.zoom { position: relative; width: 58px; height: 21px; border-radius: 3px; background: #323232; }
.win-b .zoom { background: #3a2e2e; }
.zoom select { appearance: none; width: 100%; height: 100%; padding-left: 8px; font-size: 10px; }
.zoom svg { position: absolute; right: 9px; top: 7px; width: 8px; height: 8px; pointer-events: none; color: #aaa; }
.zoomtools .full { width: 36px; margin-left: 4px; border-left: 1px solid #313131; }

.taskbar { flex: none; height: 31px; display: flex; align-items: center; padding: 0 12px 0 8px; background: linear-gradient(90deg, #dbd5e8, #ded5e9 22%, #ead9ef 38%, #f6e1e2 52%, #f1dad9 75%, #ecd5d5); }
.taskbar svg { width: 16px; height: 16px; }
.start { width: 27px; margin-right: 4px; }
.search { width: 145px; height: 20px; display: flex; align-items: center; gap: 5px; padding: 0 3px 0 7px; border-radius: 10px; background: #f5f1f9; }
.search input { flex: 1; min-width: 0; outline: 0; font-size: 9px; }
.search input::placeholder { color: #555; opacity: 1; }
.taskbar .search .glass { width: 11px; height: 11px; }
.taskbar .search .clap { width: 32px; height: 16px; }
.pin { width: 30px; }
.pin + .task { margin-left: 2px; }
.task { position: relative; width: 110px; height: 27px; gap: 5px; padding: 0 4px; justify-content: flex-start; border-radius: 3px; white-space: nowrap; }
.explorer { width: 114px; font-size: 7px; }
.task.open::after { content: ""; position: absolute; left: 10px; bottom: 0; width: 4px; height: 2px; border-radius: 1px; background: #8c878c; }
.task.current { margin-left: 9px; width: 115px; background: #fff8; }
.task.current::after { left: 7px; width: 10px; background: #2b7b86; }
.taskbar .forecast { margin-left: 14px; gap: 5px; font-size: 7px; line-height: 11px; }
.systray { margin-left: auto; display: flex; align-items: center; gap: 12px; }
.taskbar .systray svg { width: 11px; height: 11px; }
.taskbar .systray .tiny { width: 8px; height: 8px; }
.ime { font-size: 12px; }
.status-icons { display: flex; gap: 5px; margin-right: -2px; }
.clock { text-align: right; font-size: 8px; line-height: 11px; }
```
